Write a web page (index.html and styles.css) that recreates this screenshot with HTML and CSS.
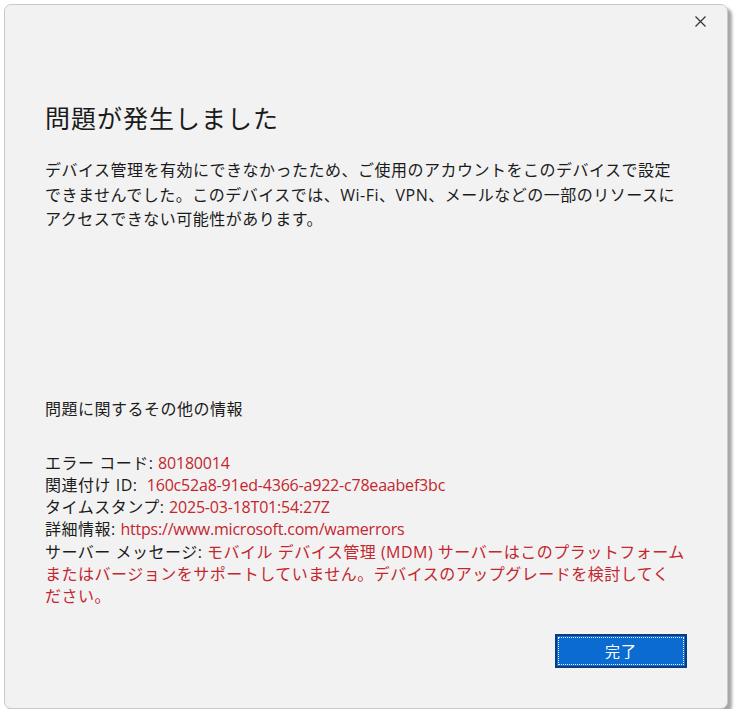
FILE: index.html
```html
<!DOCTYPE html>
<html lang="ja">
<head>
<meta charset="utf-8">
<title>問題が発生しました</title>
<link rel="stylesheet" href="styles.css">
</head>
<body>
<div class="dialog">
  <div class="titlebar">
    <button class="close" aria-label="閉じる">
      <svg width="11" height="11" viewBox="0 0 11 11"><path d="M0.5 0.5 L10.5 10.5 M10.5 0.5 L0.5 10.5" stroke="#333" stroke-width="1.2" fill="none"/></svg>
    </button>
  </div>
  <div class="content">
    <h1 class="title">問題が発生しました</h1>
    <p class="body">デバイス管理を有効にできなかったため、ご使用のアカウントをこのデバイスで設定<br>できませんでした。このデバイスでは、Wi-Fi、VPN、メールなどの一部のリソースに<br>アクセスできない可能性があります。</p>
    <h2 class="info-title">問題に関するその他の情報</h2>
    <div class="details">
      <div>エラー コード: <span class="err lat">80180014</span></div>
      <div>関連付け ID:&nbsp; <span class="err lat">160c52a8-91ed-4366-a922-c78eaabef3bc</span></div>
      <div>タイムスタンプ: <span class="err lat">2025-03-18T01:54:27Z</span></div>
      <div>詳細情報: <span class="err lat">https://www.microsoft.com/wamerrors</span></div>
      <div>サーバー メッセージ: <span class="err">モバイル デバイス管理 (MDM) サーバーはこのプラットフォーム<br>またはバージョンをサポートしていません。デバイスのアップグレードを検討してく<br>ださい。</span></div>
    </div>
  </div>
  <div class="footer">
    <button class="done"><span class="done-inner">完了</span></button>
  </div>
</div>
</body>
</html>
```
FILE: styles.css
```css
html, body {
  margin: 0;
  padding: 0;
  background: #ffffff;
}
body {
  font-family: "Segoe UI", "Open Sans", "Noto Sans CJK JP", sans-serif;
  color: #1b1b1b;
}
.dialog {
  box-sizing: border-box;
  margin: 4px 0 0 4px;
  width: 724px;
  height: 705px;
  background: #f2f2f2;
  border: 1px solid #c9c9c9;
  border-radius: 7px;
  box-shadow: 4px 4px 3px rgba(0, 0, 0, 0.35);
  display: flex;
  flex-direction: column;
}
.titlebar {
  display: flex;
  justify-content: flex-end;
  height: 34px;
  padding: 10px 20px 0 0;
  box-sizing: border-box;
}
.close {
  border: none;
  background: transparent;
  padding: 0;
  width: 13px;
  height: 13px;
  display: flex;
  align-items: center;
  justify-content: center;
}
.content {
  padding: 0 40px;
  flex: 1;
}
.title {
  margin: 62px 0 0 0;
  font-family: "Segoe UI", "Noto Sans CJK JP", sans-serif;
  font-size: 25px;
  font-weight: 400;
  letter-spacing: 1px;
  line-height: 32px;
}
.body {
  margin: 25px 0 0 0;
  font-size: 16px;
  letter-spacing: 0.5px;
  line-height: 24.5px;
}
.info-title {
  margin: 165px 0 0 0;
  font-size: 16px;
  font-weight: 400;
  letter-spacing: 0.5px;
  line-height: 24px;
}
.details {
  margin-top: 31px;
  font-size: 16px;
  letter-spacing: 0.5px;
  line-height: 22.3px;
  white-space: nowrap;
}
.err {
  color: #c4262e;
}
.lat {
  letter-spacing: -0.2px;
}
.footer {
  display: flex;
  justify-content: flex-end;
  padding: 0 40px 40px 0;
}
.done {
  box-sizing: border-box;
  width: 132px;
  height: 34px;
  background: #0b6bd0;
  border: 2px solid #0a3d80;
  padding: 1px;
  display: flex;
  font-family: "Noto Sans CJK JP", sans-serif;
}
.done-inner {
  flex: 1;
  border: 1px dotted #e8f0ff;
  color: #ffffff;
  font-size: 15px;
  line-height: 26px;
  text-align: center;
  letter-spacing: 1px;
}
```
